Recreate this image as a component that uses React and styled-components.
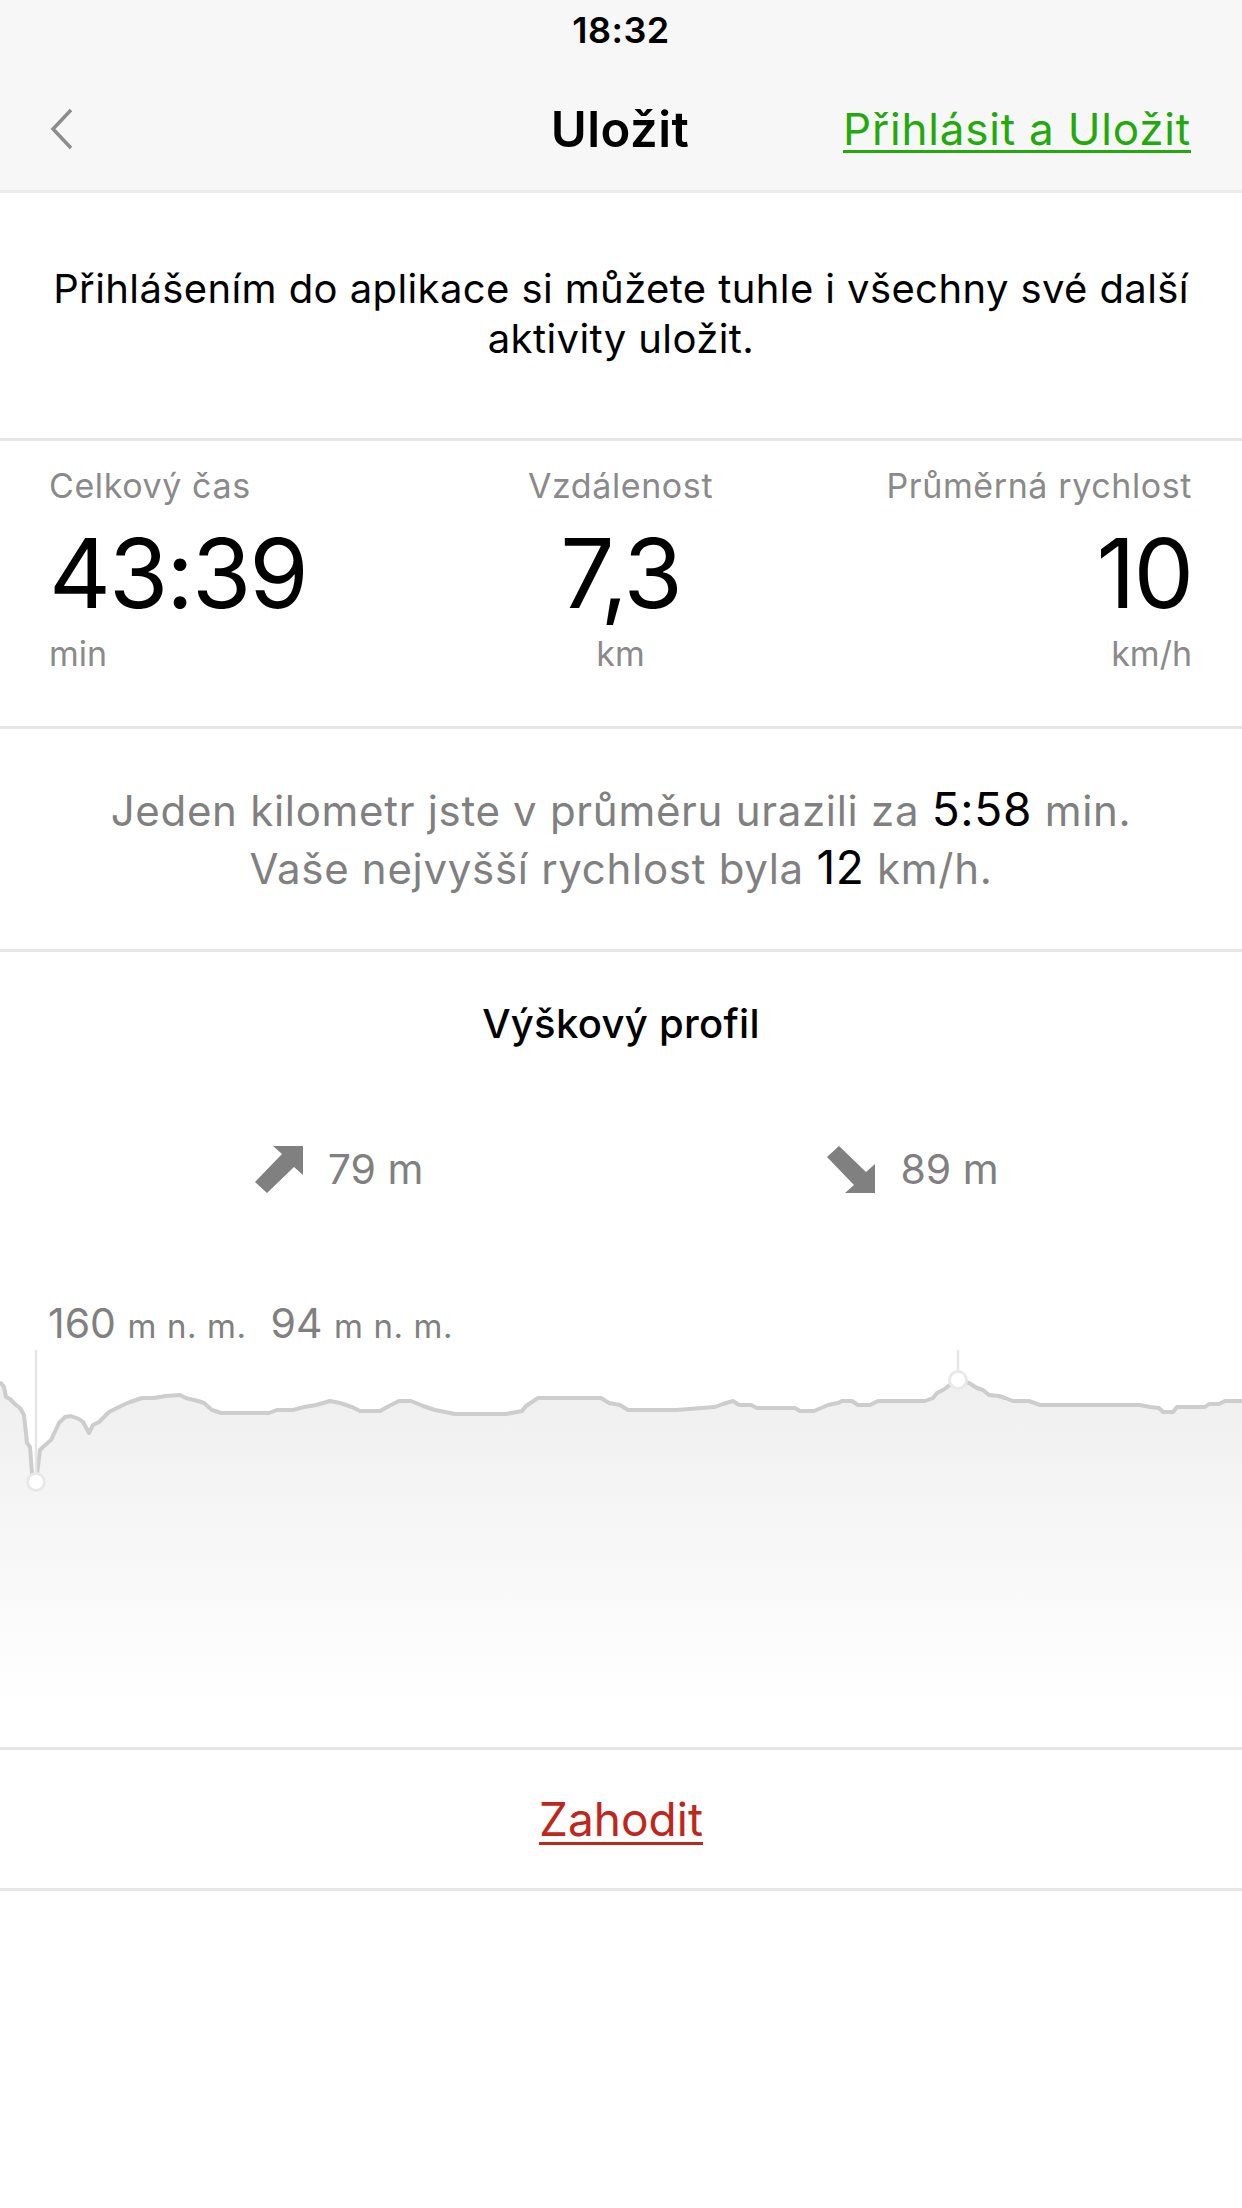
import React from 'react'
import styled, { createGlobalStyle } from 'styled-components'

const GlobalStyle = createGlobalStyle`
  html, body {
    margin: 0;
    padding: 0;
    background: #fff;
    font-family: 'Inter', 'Noto Sans', sans-serif;
    color: #000;
  }
  * { box-sizing: border-box; }
`

// elevation samples, x in page px, y in px from chart top
const profile = [
  [0, 34], [4, 39], [6, 49], [10, 51], [16, 57], [20, 60], [24, 67], [27, 95], [30, 99], [32, 125], [36, 134],
  [40, 102], [43, 99], [51, 92], [59, 75], [65, 69], [71, 68], [79, 71], [83, 74], [89, 85], [93, 77], [99, 74],
  [109, 64], [117, 60], [123, 57], [130, 54], [142, 50], [154, 50], [166, 48], [180, 47], [186, 50], [198, 53],
  [204, 55], [212, 62], [221, 65], [269, 65], [277, 62], [293, 62], [304, 59], [316, 57], [330, 53], [340, 55],
  [352, 59], [360, 63], [380, 63], [389, 58], [399, 53], [411, 53], [423, 58], [435, 62], [455, 66], [506, 66],
  [522, 63], [526, 58], [538, 50], [601, 50], [609, 55], [620, 57], [628, 62], [676, 62], [715, 59], [723, 56],
  [733, 53], [739, 57], [751, 57], [757, 60], [795, 60], [800, 63], [814, 63], [828, 57], [838, 55], [842, 53],
  [852, 53], [858, 57], [870, 57], [878, 53], [925, 53], [933, 50], [937, 45], [943, 42], [951, 36], [958, 32],
  [969, 35], [977, 40], [983, 42], [989, 47], [999, 48], [1005, 50], [1013, 53], [1029, 53], [1040, 57],
  [1140, 57], [1150, 59], [1159, 60], [1163, 64], [1173, 64], [1177, 59], [1205, 59], [1209, 56], [1219, 56],
  [1225, 53], [1242, 53],
]

const CHART_H = 399

export default function App() {
  const line = profile.map(([x, y], i) => `${i ? 'L' : 'M'}${x},${y}`).join(' ')
  const area = `${line} L1242,${CHART_H} L0,${CHART_H} Z`

  return (
    <>
      <GlobalStyle />
      <Page>
        <Header>
          <StatusBar>18:32</StatusBar>
          <NavBar>
            <BackButton>
              <svg width="26" height="42" viewBox="0 0 26 42">
                <polyline points="22,2 4,21 22,40" fill="none" stroke="#8c8c8c" strokeWidth="3.5" />
              </svg>
            </BackButton>
            <Title>Uložit</Title>
            <NavLink>Přihlásit a Uložit</NavLink>
          </NavBar>
        </Header>

        <InfoSection>
          Přihlášením do aplikace si můžete tuhle i všechny své další aktivity uložit.
        </InfoSection>

        <StatsSection>
          <Stat $align="left">
            <StatLabel>Celkový čas</StatLabel>
            <StatValue>43:39</StatValue>
            <StatUnit>min</StatUnit>
          </Stat>
          <Stat $align="center">
            <StatLabel>Vzdálenost</StatLabel>
            <StatValue>7,3</StatValue>
            <StatUnit>km</StatUnit>
          </Stat>
          <Stat $align="right">
            <StatLabel>Průměrná rychlost</StatLabel>
            <StatValue>10</StatValue>
            <StatUnit>km/h</StatUnit>
          </Stat>
        </StatsSection>

        <PaceSection>
          <div>Jeden kilometr jste v průměru urazili za <Strong>5:58</Strong> min.</div>
          <div>Vaše nejvyšší rychlost byla <Strong>12</Strong> km/h.</div>
        </PaceSection>

        <ElevationSection>
          <SectionTitle>Výškový profil</SectionTitle>
          <ClimbRow>
            <Climb>
              <svg width="48" height="48" viewBox="0 0 48 48">
                <polygon points="18,0 48,0 48,29 39,21 12,47 0,36 27,8" fill="#808080" />
              </svg>
              <ClimbValue>79 m</ClimbValue>
            </Climb>
            <Climb>
              <svg width="48" height="48" viewBox="0 0 48 48">
                <polygon points="18,47 48,47 48,18 39,26 12,0 0,11 27,39" fill="#808080" />
              </svg>
              <ClimbValue>89 m</ClimbValue>
            </Climb>
          </ClimbRow>
          <AltitudeRow>
            160 <Small>m n. m.</Small>
            <Spacer />
            94 <Small>m n. m.</Small>
          </AltitudeRow>
          <Chart viewBox={`0 0 1242 ${CHART_H}`} width="1242" height={CHART_H}>
            <defs>
              <linearGradient id="fade" x1="0" y1="30" x2="0" y2="360" gradientUnits="userSpaceOnUse">
                <stop offset="0" stopColor="#efefef" />
                <stop offset="1" stopColor="#ffffff" />
              </linearGradient>
            </defs>
            <path d={area} fill="url(#fade)" />
            <path d={line} fill="none" stroke="#cdcdcd" strokeWidth="4" strokeLinejoin="round" />
            <line x1="36" y1="2" x2="36" y2="125" stroke="#e6e6e6" strokeWidth="2.5" />
            <circle cx="36" cy="134" r="8.5" fill="#fff" stroke="#e8e8e8" strokeWidth="3" />
            <line x1="958" y1="2" x2="958" y2="23" stroke="#e6e6e6" strokeWidth="2.5" />
            <circle cx="958" cy="32" r="8.5" fill="#fff" stroke="#e8e8e8" strokeWidth="3" />
          </Chart>
        </ElevationSection>

        <DiscardSection>
          <DiscardLink>Zahodit</DiscardLink>
        </DiscardSection>
      </Page>
    </>
  )
}

const Page = styled.div`
  width: 1242px;
  min-height: 2208px;
  background: #fff;
`

const Header = styled.header`
  background: #f7f7f7;
  border-bottom: 3px solid #ececec;
`

const StatusBar = styled.div`
  height: 60px;
  display: flex;
  align-items: center;
  justify-content: center;
  font-size: 36px;
  font-weight: 600;
  letter-spacing: 0.5px;
`

const NavBar = styled.div`
  height: 130px;
  padding: 8px 51px 0 49px;
  display: grid;
  grid-template-columns: 1fr auto 1fr;
  align-items: center;
`

const BackButton = styled.div`
  display: flex;
  align-items: center;
  justify-self: start;
`

const Title = styled.div`
  font-size: 49px;
  font-weight: 600;
  letter-spacing: 0.5px;
`

const NavLink = styled.a`
  justify-self: end;
  font-size: 44px;
  letter-spacing: 0.8px;
  color: #22a90c;
  text-decoration: underline;
  text-decoration-thickness: 3px;
  text-underline-offset: 5px;
`

const Section = styled.section`
  border-bottom: 3px solid #e6e6e6;
`

const InfoSection = styled(Section)`
  height: 248px;
  padding: 0 36px 3px;
  display: flex;
  align-items: center;
  justify-content: center;
  text-align: center;
  font-size: 40px;
  letter-spacing: 0.4px;
  line-height: 50px;
`

const StatsSection = styled(Section)`
  height: 288px;
  padding: 24px 50px 0 49px;
  display: grid;
  grid-template-columns: 1fr 1fr 1fr;
`

const Stat = styled.div`
  display: flex;
  flex-direction: column;
  align-items: ${p => (p.$align === 'left' ? 'flex-start' : p.$align === 'right' ? 'flex-end' : 'center')};
`

const StatLabel = styled.div`
  font-size: 34px;
  line-height: 41px;
  letter-spacing: 0.6px;
  color: #8a8a8a;
`

const StatValue = styled.div`
  margin-top: 10px;
  font-size: 96px;
  line-height: 115px;
  letter-spacing: -2px;
`

const StatUnit = styled.div`
  margin-top: 2px;
  font-size: 34px;
  line-height: 41px;
  color: #8a8a8a;
`

const PaceSection = styled(Section)`
  height: 223px;
  padding-top: 52px;
  text-align: center;
  font-size: 42px;
  letter-spacing: 0.7px;
  line-height: 57px;
  color: #808080;
`

const Strong = styled.span`
  font-size: 46px;
  color: #000;
`

const ElevationSection = styled(Section)`
  padding-top: 49px;
  display: flex;
  flex-direction: column;
`

const SectionTitle = styled.div`
  text-align: center;
  font-size: 40px;
  line-height: 46px;
  font-weight: 500;
  letter-spacing: 0.3px;
`

const ClimbRow = styled.div`
  margin-top: 98px;
  padding: 0 47px 0 57px;
  display: grid;
  grid-template-columns: 1fr 1fr;
  column-gap: 10px;
`

const Climb = styled.div`
  display: flex;
  align-items: center;
  justify-content: center;
  gap: 25px;
  svg { display: block; }
`

const ClimbValue = styled.span`
  font-size: 41px;
  line-height: 49px;
  color: #808080;
`

const AltitudeRow = styled.div`
  margin-top: 105px;
  padding-left: 48px;
  height: 49px;
  font-size: 41px;
  line-height: 49px;
  color: #808080;
  white-space: pre;
`

const Small = styled.span`
  font-size: 33px;
  letter-spacing: 0.6px;
`

const Spacer = styled.span`
  display: inline-block;
  width: 24px;
`

const Chart = styled.svg`
  display: block;
`

const DiscardSection = styled(Section)`
  height: 141px;
  display: flex;
  align-items: center;
  justify-content: center;
`

const DiscardLink = styled.a`
  font-size: 46px;
  color: #c0271c;
  text-decoration: underline;
  text-decoration-thickness: 3px;
  text-underline-offset: 6px;
`
